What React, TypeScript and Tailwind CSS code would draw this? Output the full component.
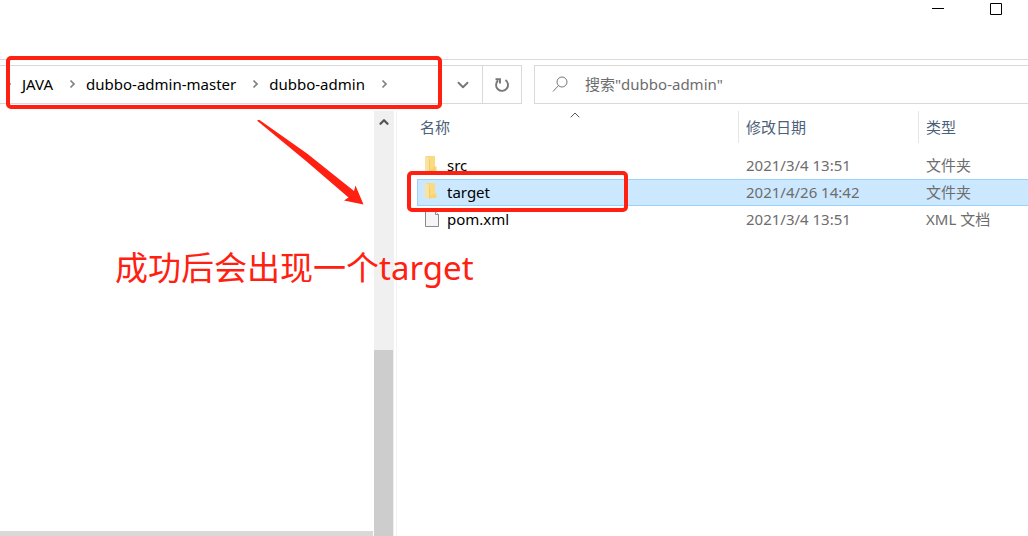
import React from "react";
import { ChevronDown, ChevronUp } from "lucide-react";

interface FileItem {
  name: string;
  date: string;
  type: string;
  kind: "folder" | "file";
  selected?: boolean;
}

const crumbs = ["JAVA", "dubbo-admin-master", "dubbo-admin"];

const files: FileItem[] = [
  { name: "src", date: "2021/3/4 13:51", type: "文件夹", kind: "folder" },
  {
    name: "target",
    date: "2021/4/26 14:42",
    type: "文件夹",
    kind: "folder",
    selected: true,
  },
  { name: "pom.xml", date: "2021/3/4 13:51", type: "XML 文档", kind: "file" },
];

const FolderIcon = () => (
  <svg width="16" height="18" viewBox="0 0 16 18" aria-hidden="true">
    <path d="M2 0h9v10.500h1.500V15H5z" fill="#f7d576" />
    <path d="M5.500 0H11v10.500L5.500 13z" fill="#fbdb82" />
    <path d="M1 0h1.500L6 2.500V16L1 14.500z" fill="#fbe2a0" />
    <path d="M5 2.500l1 .5V16l-1-.4z" fill="#efcd74" />
  </svg>
);

const FileIcon = () => (
  <svg width="16" height="18" viewBox="0 0 16 18" aria-hidden="true">
    <path d="M1.500 1.500h10l3 3v12h-13z" fill="#f5f5f5" stroke="#8a8a8a" />
    <path d="M11.500 1.500v3h3" fill="#fff" stroke="#8a8a8a" />
  </svg>
);

const CrumbArrow = () => (
  <svg width="7" height="10" viewBox="0 0 7 10" aria-hidden="true">
    <path d="M1.500 1.500L5 5L1.500 8.500" fill="none" stroke="#808080" strokeWidth="1.700" />
  </svg>
);

const TitleBar = () => (
  <header className="flex h-[60px] items-start justify-end border-b border-[#d9d9d9] pr-[26px]">
    <div className="flex gap-[46px] pt-[3px]">
      <button aria-label="最小化" className="h-3 w-3">
        <svg width="12" height="12" aria-hidden="true">
          <path d="M0 5.500h12" stroke="#000" />
        </svg>
      </button>
      <button aria-label="最大化" className="h-3 w-3">
        <svg width="12" height="12" aria-hidden="true">
          <path d="M.5.500h11v11H.5z" fill="none" stroke="#000" />
        </svg>
      </button>
    </div>
  </header>
);

const AddressBar = () => (
  <div className="flex gap-3 pt-[5px]">
    <div className="flex h-[39px] w-[522px] shrink-0 border border-l-0 border-[#d9d9d9]">
      <nav className="flex flex-1 items-center pb-[2px] pl-[5px] text-black">
        <CrumbArrow />
        {crumbs.map((crumb) => (
          <React.Fragment key={crumb}>
            <a href={`#${crumb}`} className="pr-4 pl-[10px]">
              {crumb}
            </a>
            <CrumbArrow />
          </React.Fragment>
        ))}
      </nav>
      <button
        aria-label="展开"
        className="flex w-[38px] items-center justify-center text-[#777]"
      >
        <ChevronDown size={18} strokeWidth={2.5} />
      </button>
      <button
        aria-label="刷新"
        className="flex w-[39px] items-center justify-center border-l border-[#d9d9d9]"
      >
        <svg width="16" height="16" viewBox="0 0 16 16" aria-hidden="true">
          <path
            d="M11.500 3A6 6 0 1 1 4 3.500M1.500 2.200H6V6.500"
            fill="none"
            stroke="#777"
            strokeWidth="1.900"
          />
        </svg>
      </button>
    </div>
    <label className="flex h-[39px] flex-1 items-center gap-4 border border-r-0 border-[#d9d9d9] pl-[17px]">
      <svg width="17" height="17" viewBox="0 0 17 17" aria-hidden="true">
        <circle cx="10" cy="6" r="5" fill="none" stroke="#777" />
        <path d="M6.500 9.500L1 15.500" stroke="#777" />
      </svg>
      <input
        type="text"
        aria-label="搜索"
        placeholder={'搜索"dubbo-admin"'}
        className="min-w-0 flex-1 pb-[2px] outline-none placeholder:text-[#6d6d6d]"
      />
    </label>
  </div>
);

const NavigationPane = () => (
  <aside className="flex w-[397px] shrink-0 border-r border-[#f3f3f3]">
    <div className="flex flex-1 flex-col justify-end">
      <div className="mr-px h-[5px] bg-[#d9d9d9]"></div>
    </div>
    <div className="mr-[2px] flex w-5 flex-col bg-[#f0f0f0]">
      <div className="flex h-[239px] justify-center pt-1 text-[#555]">
        <ChevronUp size={14} strokeWidth={4} />
      </div>
      <div className="mr-px flex-1 bg-[#cdcdcd]"></div>
    </div>
  </aside>
);

const FileRow = ({ file }: { file: FileItem }) => {
  const border = file.selected ? "border-[#99d1ff]" : "border-transparent";

  return (
    <tr className={file.selected ? "bg-[#cce8ff]" : ""}>
      <td className={`h-[27px] border-y border-l p-0 pb-[2px] ${border}`}>
        <div className="flex items-center gap-[7px] pl-[6px] text-black">
          {file.kind === "folder" ? <FolderIcon /> : <FileIcon />}
          {file.name}
        </div>
      </td>
      <td className={`border-y p-0 pb-[2px] pl-2 ${border}`}>{file.date}</td>
      <td className={`border-y p-0 pb-[2px] pl-2 ${border}`}>{file.type}</td>
    </tr>
  );
};

const FileTable = () => (
  <main className="relative flex-1 pl-5">
    <ChevronUp
      size={16}
      strokeWidth={1.5}
      className="absolute -top-1 left-[170px] text-[#555]"
    />
    <table className="w-full table-fixed border-separate border-spacing-0 text-left text-[#6d6d6d]">
      <thead>
        <tr className="text-[#4c607a]">
          <th className="h-[41px] w-[321px] p-0 align-top font-normal">
            <div className="flex h-8 items-center pl-[3px]">名称</div>
          </th>
          <th className="w-[180px] p-0 align-top font-normal">
            <div className="flex h-8 items-center border-l border-[#e5e5e5] pl-[7px]">
              修改日期
            </div>
          </th>
          <th className="p-0 align-top font-normal">
            <div className="flex h-8 items-center border-l border-[#e5e5e5] pl-[7px]">
              类型
            </div>
          </th>
        </tr>
      </thead>
      <tbody>
        {files.map((file) => (
          <FileRow key={file.name} file={file} />
        ))}
      </tbody>
    </table>
  </main>
);

// red marks drawn over the window
const Annotations = () => (
  <div className="pointer-events-none">
    <div className="absolute left-[6px] top-14 h-[53px] w-[436px] rounded-[5px] border-4 border-[#ff2011]"></div>
    <div className="absolute left-[407px] top-[171px] h-[41px] w-[221px] rounded-[5px] border-4 border-[#ff2011]"></div>
    <svg
      width="108"
      height="88"
      viewBox="0 0 108 88"
      className="absolute left-[257px] top-[118px]"
      aria-hidden="true"
    >
      <path
        d="M.5 2L2.500 2L50 35.500L97 73L98.500 67.500L106.500 86.500L87 82.500L91.500 79.500L49 43L.5 3z"
        fill="#ff2011"
      />
    </svg>
    <p className="absolute left-[115px] top-[246px] whitespace-nowrap text-[33px] leading-[44px] text-[#ff2011]">
      成功后会出现一个target
    </p>
  </div>
);

export default function App() {
  return (
    <div className="relative flex min-h-screen flex-col overflow-hidden bg-white font-['Noto_Sans','Noto_Sans_CJK_SC',sans-serif] text-[15px] leading-[22px]">
      <TitleBar />
      <AddressBar />
      <div className="flex flex-1 pt-[7px]">
        <NavigationPane />
        <FileTable />
      </div>
      <Annotations />
    </div>
  );
}
